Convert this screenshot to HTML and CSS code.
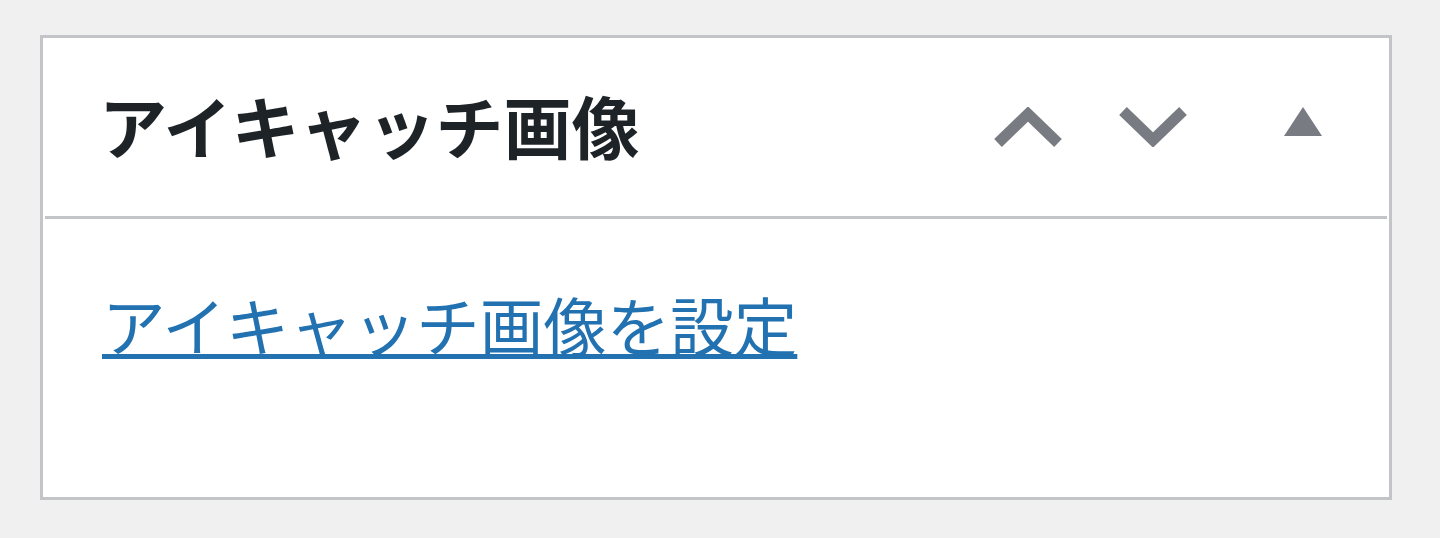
FILE: index.html
```html
<!DOCTYPE html>
<html lang="ja">
<head>
    <meta charset="UTF-8">
    <meta name="viewport" content="width=device-width, initial-scale=1.0">
    <title>アイキャッチ画像</title>
    <link rel="stylesheet" href="styles.css">
</head>
<body>
    <div class="postbox">
        <!-- Box header: title and handle buttons -->
        <div class="postbox-header">
            <h2 class="hndle">アイキャッチ画像</h2>
            <div class="handle-actions">
                <button class="handle-btn" type="button" aria-label="上へ移動">
                    <svg class="chevron" viewBox="0 0 68 40" width="68" height="40">
                        <polyline points="4,36 34,7 64,36" />
                    </svg>
                </button>
                <button class="handle-btn" type="button" aria-label="下へ移動">
                    <svg class="chevron" viewBox="0 0 68 40" width="68" height="40">
                        <polyline points="4,4 34,33 64,4" />
                    </svg>
                </button>
                <button class="handle-btn toggle" type="button" aria-label="パネルを切り替え">
                    <svg class="triangle" viewBox="0 0 40 30" width="40" height="30">
                        <polygon points="1,29 20,0 39,29" />
                    </svg>
                </button>
            </div>
        </div>

        <div class="inside">
            <a href="#" class="set-thumbnail">アイキャッチ画像を設定</a>
        </div>
    </div>
</body>
</html>
```

FILE: styles.css
```css
body {
    margin: 0;
    padding: 35px 48px 0 40px;
    background-color: #f0f0f1;
    font-family: "Noto Sans CJK JP", "Noto Sans", sans-serif;
}

.postbox {
    width: 1346px;
    height: 459px;
    background-color: #fff;
    border: 3px solid #c3c4c7;
}

.postbox-header {
    display: flex;
    align-items: center;
    justify-content: space-between;
    height: 178px;
    margin: 0 2px;
    border-bottom: 3px solid #c3c4c7;
}

.hndle {
    margin: 0 0 4px;
    padding-left: 54px;
    font-size: 68px;
    font-weight: 700;
    line-height: 1;
    color: #1d2327;
}

.handle-actions {
    display: flex;
    align-items: flex-start;
    padding-right: 64px;
}

.handle-btn {
    display: block;
    padding: 0;
    border: none;
    background: none;
    cursor: pointer;
}

.handle-btn + .handle-btn {
    margin-left: 57px;
}

.handle-btn.toggle {
    margin-left: 96px;
}

.chevron {
    display: block;
}

.chevron polyline {
    fill: none;
    stroke: #787c82;
    stroke-width: 11;
    stroke-linejoin: miter;
}

.triangle {
    display: block;
}

.triangle polygon {
    fill: #787c82;
}

.inside {
    padding: 60px 0 0 59px;
}

.set-thumbnail {
    font-size: 63.5px;
    line-height: 1.4;
    color: #2271b1;
    text-decoration: underline;
    text-decoration-thickness: 5px;
    text-underline-offset: 3px;
}
```
